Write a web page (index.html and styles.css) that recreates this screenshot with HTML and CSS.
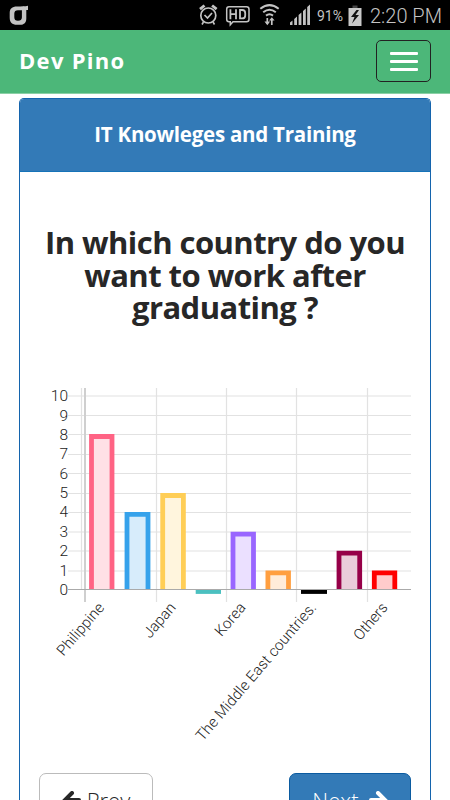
FILE: index.html
```html
<!DOCTYPE html>
<html lang="en">
<head>
    <meta charset="UTF-8">
    <meta name="viewport" content="width=device-width, initial-scale=1.0">
    <title>Dev Pino</title>
    <link rel="stylesheet" href="styles.css">
</head>
<body>
    <div class="status-bar">
        <svg class="status-icon" width="20" height="20" viewBox="0 0 20 20">
            <path d="M19 .8v4.200h-1.700v8.500c0 4-2 6.300-6.300 6.300H8C3 19.800.7 17.500.7 12.500V8.500C.7 3.500 3 1.500 8 1.500c4.500 0 8 0 11-.7zM9 5.300c-2.500 0-3.700 1-3.700 3.500v3.500c0 2.500 1.200 3.500 3.700 3.500s3.900-1 3.900-3.500V5.300z" fill="#c3c3c3" fill-rule="evenodd"/>
        </svg>
        <div class="status-right">
            <svg width="122" height="30" viewBox="192 0 122 30" fill="none" stroke="#c3c3c3">
                <circle cx="208.300" cy="15.500" r="7.500" stroke-width="1.700"/>
                <path d="M204.500 15l3 3 4.500-5" stroke-width="1.700"/>
                <path d="M200 9.200l4.500-3.700M216.600 9.200l-4.500-3.700" stroke-width="2.800"/>
                <path d="M203.500 22l-1.500 2.500M213 22l1.500 2.500" stroke-width="1.600"/>
                <path d="M229 6.700h17.500q2.500 0 2.500 2.500v10q0 2.500-2.500 2.500h-13.500l-2.700 3v-3h-1.300q-2.300 0-2.300-2.500v-10q0-2.500 2.300-2.500z" stroke-width="1.500"/>
                <path d="M230.400 9.200v10M230.400 14.200h5.600M236 9.200v10M240 10v8.400h2.200q3 0 3-3v-2.400q0-3-3-3z" stroke-width="1.800"/>
                <path d="M260.300 8.700q9.200-7.200 18.400 0M263.200 12.300q6.300-5 12.600 0M266 15.600q3.500-2.600 7 0" stroke-width="2"/>
                <path d="M267.300 18v6M271.800 25v-6" stroke-width="1.700"/>
                <path d="M264.500 21.500h5.600l-2.800 3.700zM269 20.500h5.600l-2.800-3.200z" fill="#c3c3c3" stroke="none"/>
                <path d="M290 25v-2.500l2.500-2V25zM294.200 25v-6l2.800-2.500V25zM298.600 25V15l2.800-2.500V25zM303 25V11l2.800-2.500V25zM307.200 25V7l2.800-2.500V25z" fill="#c3c3c3" stroke="none"/>
            </svg>
            <span class="battery-text">91%</span>
            <svg class="battery" width="14" height="22" viewBox="0 0 14 22">
                <path d="M4.500.5h5v3h-5z" fill="#444"/>
                <path d="M.5 3h13v18H.5z" fill="#c9c9c9"/>
                <path d="M8.500 5L3 12h3.500L4 18.500 11 10H7.500L11 5z" fill="#111"/>
            </svg>
            <span class="clock">2:20 PM</span>
        </div>
    </div>

    <nav class="navbar">
        <a class="brand">Dev Pino</a>
        <button class="navbar-toggle" aria-label="Menu">
            <span class="icon-bar"></span>
            <span class="icon-bar"></span>
            <span class="icon-bar"></span>
        </button>
    </nav>

    <div class="panel">
        <div class="panel-heading">IT Knowleges and Training</div>
        <div class="panel-body">
            <h1>In which country do you<br>want to work after<br>graduating ?</h1>

            <svg class="chart" width="372" height="370" viewBox="39 385 372 370">
                <g class="grid">
                    <path d="M68 396H411M68 415.500H411M68 434.500H411M68 454.500H411M68 473.500H411M68 493.500H411M68 512.500H411M68 532H411M68 551H411M68 571H411"/>
                    <path d="M81.500 388V589M156.500 388V602M226.500 388V602M296.500 388V602M367.500 388V602"/>
                </g>
                <path class="axis" d="M85 388V602"/>

                <g class="bars">
                    <path d="M91.500 589.500V436.500H112V589.500" stroke="#ff6384" fill="#ffe0e6"/>
                    <path d="M127 589.500V514.300H148V589.500" stroke="#36a2eb" fill="#d7ecfb"/>
                    <path d="M162.700 589.500V495.500H183.400V589.500" stroke="#ffce56" fill="#fff5dd"/>
                    <path d="M195.700 591.500H221" stroke="#4bc0c0"/>
                    <path d="M233 589.500V534.200H253.500V589.500" stroke="#9966ff" fill="#ebe0ff"/>
                    <path d="M267.900 589.500V572.800H288.500V589.500" stroke="#ff9f40" fill="#ffecd9"/>
                    <path d="M301 591.500H327" stroke="#000"/>
                    <path d="M339 589.500V553.200H359.700V589.500" stroke="#960048" fill="#eaccda"/>
                    <path d="M374.300 589.500V572.800H394.800V589.500" stroke="#f00" fill="#fcc"/>
                </g>
                <path class="zero-line" d="M68 589.500H411"/>

                <g class="y-labels">
                    <text x="68" y="401">10</text>
                    <text x="68" y="420.500">9</text>
                    <text x="68" y="439.500">8</text>
                    <text x="68" y="459">7</text>
                    <text x="68" y="478.500">6</text>
                    <text x="68" y="498">5</text>
                    <text x="68" y="517">4</text>
                    <text x="68" y="536.500">3</text>
                    <text x="68" y="556">2</text>
                    <text x="68" y="575.500">1</text>
                    <text x="68" y="594.500">0</text>
                </g>
                <g class="x-labels">
                    <text transform="translate(105 608) rotate(-49.500)" textLength="64">Philippine</text>
                    <text transform="translate(176.500 608) rotate(-49.500)">Japan</text>
                    <text transform="translate(246.500 608) rotate(-49.500)">Korea</text>
                    <text transform="translate(317 608) rotate(-49.500)" textLength="176">The Middle East countries.</text>
                    <text transform="translate(388.500 608) rotate(-49.500)">Others</text>
                </g>
            </svg>

            <div class="pager">
                <button class="btn btn-default">
                    <svg width="19" height="18" viewBox="0 0 19 18"><path d="M10 2L3 9l7 7M3 9h14" /></svg>
                    Prev
                </button>
                <button class="btn btn-primary">
                    Next
                    <svg width="19" height="18" viewBox="0 0 19 18"><path d="M9 2l7 7-7 7M16 9H2" /></svg>
                </button>
            </div>
        </div>
    </div>
</body>
</html>
```
FILE: styles.css
```css
* {
    margin: 0;
    padding: 0;
    box-sizing: border-box;
}

body {
    height: 800px;
    overflow: hidden;
    background: #fff;
    font-family: "Open Sans", sans-serif;
    color: #272727;
}

.status-bar {
    display: flex;
    justify-content: space-between;
    align-items: center;
    height: 30px;
    padding: 0 9px;
    background: #000;
    color: #c3c3c3;
    font-family: Roboto, sans-serif;
    white-space: nowrap;
}

.status-right {
    display: flex;
    align-items: center;
}

.battery-text {
    width: 31px;
    margin-left: 3px;
    padding-top: 1px;
    font-size: 14px;
}

.battery {
    margin-top: 1px;
}

.clock {
    width: 71px;
    margin-left: 8px;
    padding-top: 1px;
    font-size: 20px;
    font-weight: 300;
}

.navbar {
    display: flex;
    justify-content: space-between;
    align-items: center;
    height: 64px;
    padding: 0 19px;
    border-bottom: 1px solid #8bd0a5;
    background: #4cb779;
}

.brand {
    margin-top: -3px;
    color: #fff;
    font-size: 22px;
    font-weight: bold;
    letter-spacing: 1.3px;
}

.navbar-toggle {
    display: flex;
    flex-direction: column;
    justify-content: center;
    align-items: center;
    gap: 5px;
    width: 55px;
    height: 42px;
    margin-top: -1px;
    border: 1px solid #222;
    border-radius: 5px;
    background: transparent;
}

.icon-bar {
    width: 28px;
    height: 3px;
    border-radius: 1px;
    background: #fff;
}

.panel {
    height: 702px;
    margin: 4px 19px 0;
    border: 1px solid #1464ad;
    border-bottom: 0;
    border-radius: 5px 5px 0 0;
    overflow: hidden;
}

.panel-heading {
    height: 73px;
    border-bottom: 1px solid #1673b8;
    background: #337ab7;
    color: #fff;
    font-size: 20.5px;
    font-weight: bold;
    letter-spacing: -0.25px;
    line-height: 71px;
    text-align: center;
}

.panel-body {
    padding: 54px 19px 0;
}

h1 {
    font-size: 31px;
    font-weight: bold;
    letter-spacing: -0.55px;
    line-height: 32.5px;
    text-align: center;
    white-space: nowrap;
}

.chart {
    display: block;
    margin-top: 61px;
}

.grid {
    stroke: #e2e2e2;
    stroke-width: 1.2;
}

.axis {
    stroke: #cfcfcf;
    stroke-width: 2;
}

.zero-line {
    stroke: #aaa;
    stroke-width: 1.2;
}

.bars {
    fill: none;
    stroke-width: 4.8;
}

.y-labels,
.x-labels {
    fill: #222;
    font-family: Roboto, sans-serif;
    font-size: 15px;
    font-weight: 350;
    text-anchor: end;
}

.y-labels {
    font-size: 15.5px;
}

.pager {
    display: flex;
    justify-content: space-between;
    margin-top: 18px;
}

.btn {
    display: flex;
    justify-content: center;
    align-items: center;
    gap: 6px;
    height: 55px;
    border-radius: 7px;
    font-family: "Open Sans", sans-serif;
    font-size: 22px;
    font-weight: 350;
}

.btn path {
    fill: none;
    stroke: currentColor;
    stroke-width: 4;
    stroke-linecap: round;
}

.btn-default {
    width: 114px;
    border: 1px solid #bbb;
    background: #fff;
    color: #272727;
}

.btn-primary {
    width: 122px;
    gap: 10px;
    border: 1px solid #0b5ba0;
    background: #337ab7;
    color: #fff;
}
```
